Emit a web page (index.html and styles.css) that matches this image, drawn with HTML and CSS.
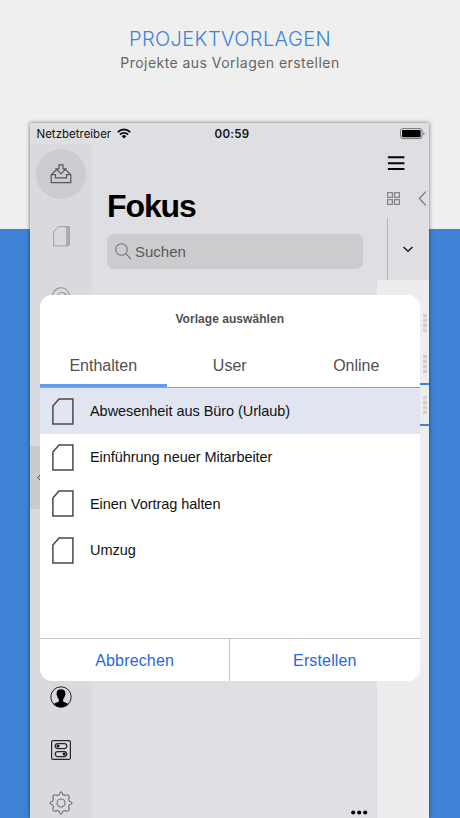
FILE: index.html
```html
<!DOCTYPE html>
<html lang="de">
  <head>
    <meta charset="UTF-8" />
    <meta name="viewport" content="width=device-width, initial-scale=1.0" />
    <title>Projektvorlagen</title>
    <link rel="stylesheet" href="styles.css">
  </head>

  <body>
    <header class="intro">
      <h1 class="intro-title">PROJEKTVORLAGEN</h1>
      <p class="intro-text">Projekte aus Vorlagen erstellen</p>
    </header>

    <div class="phone">
      <div class="status">
        <div class="carrier">
          <span>Netzbetreiber</span>
          <svg class="wifi" width="14" height="11" viewBox="0 0 14 11">
            <path d="M0.8 4.1a8.8 8.8 0 0 1 12.4 0M3 6.5a5.7 5.7 0 0 1 8 0" fill="none" stroke="#111" stroke-width="1.9" />
            <path d="M4.7 8.2a3.3 3.3 0 0 1 4.6 0L7 10.5z" fill="#111" />
          </svg>
        </div>
        <span class="clock">00:59</span>
        <svg class="battery" width="25" height="12" viewBox="0 0 25 12">
          <rect x="0.5" y="0.6" width="21.6" height="10" rx="2.3" fill="none" stroke="#77777a" />
          <rect x="2" y="2" width="18.6" height="7.2" rx="1" fill="#000" />
          <path d="M23.3 4v3.2q1.2-.5 1.2-1.6T23.3 4z" fill="#77777a" />
        </svg>
      </div>

      <div class="screen">
        <nav class="sidebar">
          <a class="side-item active">
            <svg width="22" height="20" viewBox="0 0 22 20" fill="none" stroke="#58585c" stroke-width="1.2">
              <path d="M6.8 5.2 1.2 10.7v8h19.6v-8L15.2 5.2M1.2 10.7h4.3v3.2h11v-3.2h4.3" />
              <path d="M9 .8h4v4h2.8L11 9.8 6.2 4.8H9z" />
            </svg>
          </a>
          <a class="side-item pages">
            <svg width="17" height="21" viewBox="0 0 17 21">
              <path d="M14 1h2.5v18L14 20z" fill="#b4b4b8" />
              <path d="M5.5.7h10.800v18.300l-2 .9H.7V5.5zM13.800 1v19" fill="none" stroke="#9c9ca0" stroke-width="1" />
            </svg>
          </a>
          <a class="side-item mention">
            <svg width="20" height="20" viewBox="0 0 20 20" fill="none" stroke="#98989c" stroke-width="1.1">
              <path d="M14 16.800a8.500 8.500 0 1 1 4.500-7c0 3-1.200 4.500-2.800 4.500s-2-1.200-1.700-3l.9-5.500" />
              <path d="M13.800 9c0 2.800-2 5-4.200 5s-3.300-1.500-3.300-3.700c0-2.800 1.800-5 4.300-5 2 0 3.200 1.500 3.200 3.700z" />
            </svg>
          </a>
          <div class="drawer-tab">
            <svg width="4" height="7" viewBox="0 0 4 7"><path d="M3.400.6.8 3.500l2.600 2.900" fill="none" stroke="#444" /></svg>
          </div>
          <a class="side-item user">
            <svg width="22" height="22" viewBox="0 0 22 22">
              <circle cx="11" cy="11" r="10.2" fill="none" stroke="#222" stroke-width="1" />
              <path d="M11 3.200c-3.100 0-4.500 1.500-4.300 4.400l-.2 1.200.8 1.500c.3 1.500.8 2.300 1.600 3.100v2.100L3.400 18a10.300 10.300 0 0 0 15.200 0l-5.500-2.500v-2.100c.8-.8 1.300-1.600 1.600-3.100l.8-1.500-.2-1.200c.2-2.900-1.200-4.400-4.300-4.400z" />
            </svg>
          </a>
          <a class="side-item switches">
            <svg width="20" height="20" viewBox="0 0 20 20" fill="none" stroke="#28282a" stroke-width="1.2">
              <rect x=".6" y=".6" width="18.8" height="18.8" rx="1.5" />
              <rect x="4.2" y="3.6" width="11.6" height="5" rx="2.5" />
              <rect x="4.2" y="11.6" width="11.6" height="5" rx="2.5" />
              <circle cx="7" cy="6.1" r="1.5" fill="#111" stroke="none" />
              <circle cx="13.2" cy="14.1" r="1.5" fill="#111" stroke="none" />
            </svg>
          </a>
          <a class="side-item settings">
            <svg width="24" height="24" viewBox="0 0 24 24" fill="none" stroke="#707074" stroke-width="1.1" stroke-linejoin="round">
              <path d="M10.300 3.600Q11 .9 12 .9t1.700 2.700q1.300.3 2.400.9Q18.600 3 19.500 4.500 21 5.400 19.500 7.900q.6 1.100.9 2.400 2.700.7 2.700 1.700t-2.700 1.700q-.3 1.300-.9 2.400 1.500 2.500 0 3.400-.9 1.500-3.400 0-1.100.6-2.400.9-.7 2.700-1.700 2.700t-1.700-2.700q-1.300-.3-2.400-.9-2.500 1.500-3.400 0-1.500-.9 0-3.400-.6-1.100-.9-2.400Q.9 13 .9 12t2.700-1.700q.3-1.300.9-2.400Q3 5.400 4.500 4.500 5.400 3 7.900 4.500q1.100-.6 2.400-.9z" />
              <circle cx="12" cy="12" r="4" />
            </svg>
          </a>
        </nav>

        <main class="main">
          <h2 class="heading">Fokus</h2>
          <div class="search">
            <svg width="17" height="17" viewBox="0 0 17 17" fill="none" stroke="#77777b" stroke-width="1.1">
              <circle cx="6.5" cy="6.5" r="5.8" />
              <path d="M10.7 10.7 16 16" />
            </svg>
            <span>Suchen</span>
          </div>
          <svg class="more" width="17" height="5" viewBox="0 0 17 5">
            <circle cx="2.2" cy="2.5" r="2.05" /><circle cx="8.2" cy="2.5" r="2.05" /><circle cx="14.2" cy="2.5" r="2.05" />
          </svg>
        </main>

        <aside class="rail">
          <svg class="burger" width="18" height="15" viewBox="0 0 18 15">
            <path d="M.9 1.300h16.500M.9 7.200h16.500M.9 13.100h16.500" stroke="#050508" stroke-width="2" />
          </svg>
          <div class="rail-tools">
            <svg width="13" height="13" viewBox="0 0 13 13" fill="none" stroke="#858589" stroke-width="1.3">
              <path d="M.6.6h4.800v4.800H.6zM7.600.6h4.800v4.800H7.600zM.6 7.600h4.800v4.800H.6zM7.600 7.600h4.800v4.800H7.600z" />
            </svg>
            <svg width="9" height="15" viewBox="0 0 9 15"><path d="M7.800.7 1.400 7.500l6.400 6.800" fill="none" stroke="#707074" stroke-width="1.1" /></svg>
          </div>
          <div class="rail-fold">
            <svg width="12" height="7" viewBox="0 0 12 7"><path d="M1.500 1 6 5.300 10.500 1" fill="none" stroke="#1c1c1e" stroke-width="1.5" /></svg>
          </div>
          <div class="rail-list">
            <div class="rail-card"><i class="marks"></i></div>
            <div class="rail-card lined"><i class="marks"></i></div>
            <div class="rail-card lined"><i class="marks"></i></div>
          </div>
        </aside>
      </div>

      <section class="dialog">
        <h3 class="dialog-title">Vorlage auswählen</h3>
        <div class="tabs">
          <div class="tab selected">Enthalten</div>
          <div class="tab">User</div>
          <div class="tab">Online</div>
        </div>
        <ul class="templates">
          <li class="template chosen">
            <svg class="doc" width="22" height="27" viewBox="0 0 22 27"><path d="M7 .9h13.900v25.200H.9V8z" /></svg>
            <span>Abwesenheit aus Büro (Urlaub)</span>
          </li>
          <li class="template">
            <svg class="doc" width="22" height="27" viewBox="0 0 22 27"><path d="M7 .9h13.900v25.200H.9V8z" /></svg>
            <span>Einführung neuer Mitarbeiter</span>
          </li>
          <li class="template">
            <svg class="doc" width="22" height="27" viewBox="0 0 22 27"><path d="M7 .9h13.900v25.200H.9V8z" /></svg>
            <span>Einen Vortrag halten</span>
          </li>
          <li class="template">
            <svg class="doc" width="22" height="27" viewBox="0 0 22 27"><path d="M7 .9h13.900v25.200H.9V8z" /></svg>
            <span>Umzug</span>
          </li>
        </ul>
        <div class="actions">
          <button class="action">Abbrechen</button>
          <button class="action">Erstellen</button>
        </div>
      </section>
    </div>
  </body>
</html>
```

FILE: styles.css
```css
* {
  box-sizing: border-box;
}

body {
  display: flex;
  flex-direction: column;
  align-items: flex-start;
  width: 460px;
  height: 818px;
  margin: 0;
  overflow: hidden;
  background: linear-gradient(#efefef 229px, #3f83d6 229px);
  font-family: "Liberation Sans", Arial, Helvetica, sans-serif;
}

svg {
  display: block;
  flex: none;
}

.intro {
  width: 460px;
  height: 123px;
  padding-top: 27px;
  text-align: center;
  font-family: Inter, sans-serif;
}

.intro-title {
  margin: 0;
  font-size: 20px;
  line-height: 24px;
  font-weight: 300;
  letter-spacing: 0.4px;
  color: #3f83d6;
}

.intro-text {
  margin: 2px 0 0;
  font-size: 14px;
  line-height: 20px;
  letter-spacing: 0.45px;
  color: #666;
}

.phone {
  position: relative;
  width: 399px;
  height: 695px;
  margin-left: 30px;
  background: #dfdee3;
  box-shadow: 0 0 4px rgba(0, 0, 0, 0.55);
}

/* Statusleiste */
.status {
  display: flex;
  justify-content: space-between;
  align-items: center;
  height: 21px;
  padding: 0 4.5px 0 6.5px;
  font-family: Inter, sans-serif;
  font-size: 11.5px;
  color: #111;
}

.carrier {
  display: flex;
  align-items: center;
  gap: 6px;
  width: 154px;
}

.clock {
  margin-right: auto;
  margin-left: 24px;
  font-weight: 600;
  letter-spacing: 0.3px;
}

.screen {
  display: flex;
  height: 674px;
}

/* Seitenleiste */
.sidebar {
  display: flex;
  flex-direction: column;
  align-items: center;
  width: 62px;
  padding-top: 5px;
  background: #dad9de;
}

.side-item {
  display: flex;
  justify-content: center;
  align-items: center;
  flex: none;
  width: 50px;
  height: 50px;
}

.active {
  border-radius: 50%;
  background: #cdccd1;
}

.pages {
  margin-top: 12px;
}

.mention {
  margin-top: 11px;
}

.drawer-tab {
  display: flex;
  align-items: center;
  align-self: flex-start;
  flex: none;
  width: 11px;
  height: 63px;
  margin-top: 124px;
  padding-left: 7px;
  background: #cbcacf;
}

.user {
  margin-top: 163px;
}

.switches {
  margin-top: 3px;
}

.settings {
  margin-top: 3px;
}

.main {
  display: flex;
  flex-direction: column;
  width: 285px;
  padding: 43px 9px 3px 15px;
}

.heading {
  margin: 0;
  font-size: 32px;
  line-height: 38px;
  letter-spacing: -1.1px;
  color: #000;
}

.search {
  display: flex;
  align-items: center;
  gap: 3px;
  width: 256px;
  height: 35px;
  margin-top: 9px;
  padding-left: 8px;
  border-radius: 7px;
  background: #cccbce;
  font-size: 15px;
  color: #58585c;
}

.more {
  align-self: flex-end;
  margin-top: auto;
}

.rail {
  display: flex;
  flex-direction: column;
  width: 52px;
  padding-top: 12px;
}

.burger {
  margin-left: 10px;
}

.rail-tools {
  display: flex;
  justify-content: space-between;
  align-items: center;
  height: 15px;
  margin-top: 20px;
  padding: 0 2px 0 10px;
}

.rail-fold {
  display: flex;
  justify-content: center;
  align-items: center;
  height: 62px;
  margin: 12px 0 0 10px;
  padding-right: 1px;
  border-left: 1px solid #b7b6ba;
}

.rail-list {
  flex: 1;
  padding: 23px 0 0 42px;
  background: #ededed;
}

.rail-card {
  height: 41px;
  padding: 11px 0 0 4px;
}

.rail-card.lined {
  border-bottom: 2px solid #3f83d6;
}

.marks {
  display: block;
  width: 4px;
  height: 18px;
  background: repeating-linear-gradient(#d0d2d2 0 3px, #e4e5e5 3px 5px);
}

/* Dialog */
.dialog {
  position: absolute;
  top: 172px;
  left: 10px;
  display: flex;
  flex-direction: column;
  width: 379.5px;
  height: 386px;
  border-radius: 12px;
  overflow: hidden;
  background: #fff;
}

.dialog-title {
  margin: 0;
  padding-top: 16px;
  font-size: 12px;
  line-height: 16px;
  letter-spacing: 0.05px;
  text-align: center;
  color: #505052;
}

.tabs {
  display: flex;
  height: 61px;
  border-bottom: 1px solid #73a5f0;
}

.tab {
  width: 126.5px;
  padding-top: 29px;
  font-size: 16px;
  line-height: 20px;
  text-align: center;
  color: #505052;
}

.tab.selected {
  border-bottom: 3px solid #629cf5;
}

.templates {
  flex: 1;
  margin: 0;
  padding: 0;
  list-style: none;
}

.template {
  display: flex;
  align-items: center;
  gap: 16px;
  height: 46.3px;
  padding-left: 12px;
  font-size: 14.5px;
  letter-spacing: -0.05px;
  color: #111;
}

.template.chosen {
  background: #e0e5f1;
}

.doc {
  fill: none;
  stroke: #48484c;
  stroke-width: 1.5;
}

.actions {
  display: flex;
  height: 43px;
  border-top: 1px solid #c6c6c8;
}

.action {
  flex: 1;
  padding: 2px 0 0;
  border: 0;
  background: none;
  font-family: inherit;
  font-size: 16px;
  letter-spacing: 0.15px;
  color: #2667df;
}

.action + .action {
  border-left: 1px solid #c6c6c8;
}
```
